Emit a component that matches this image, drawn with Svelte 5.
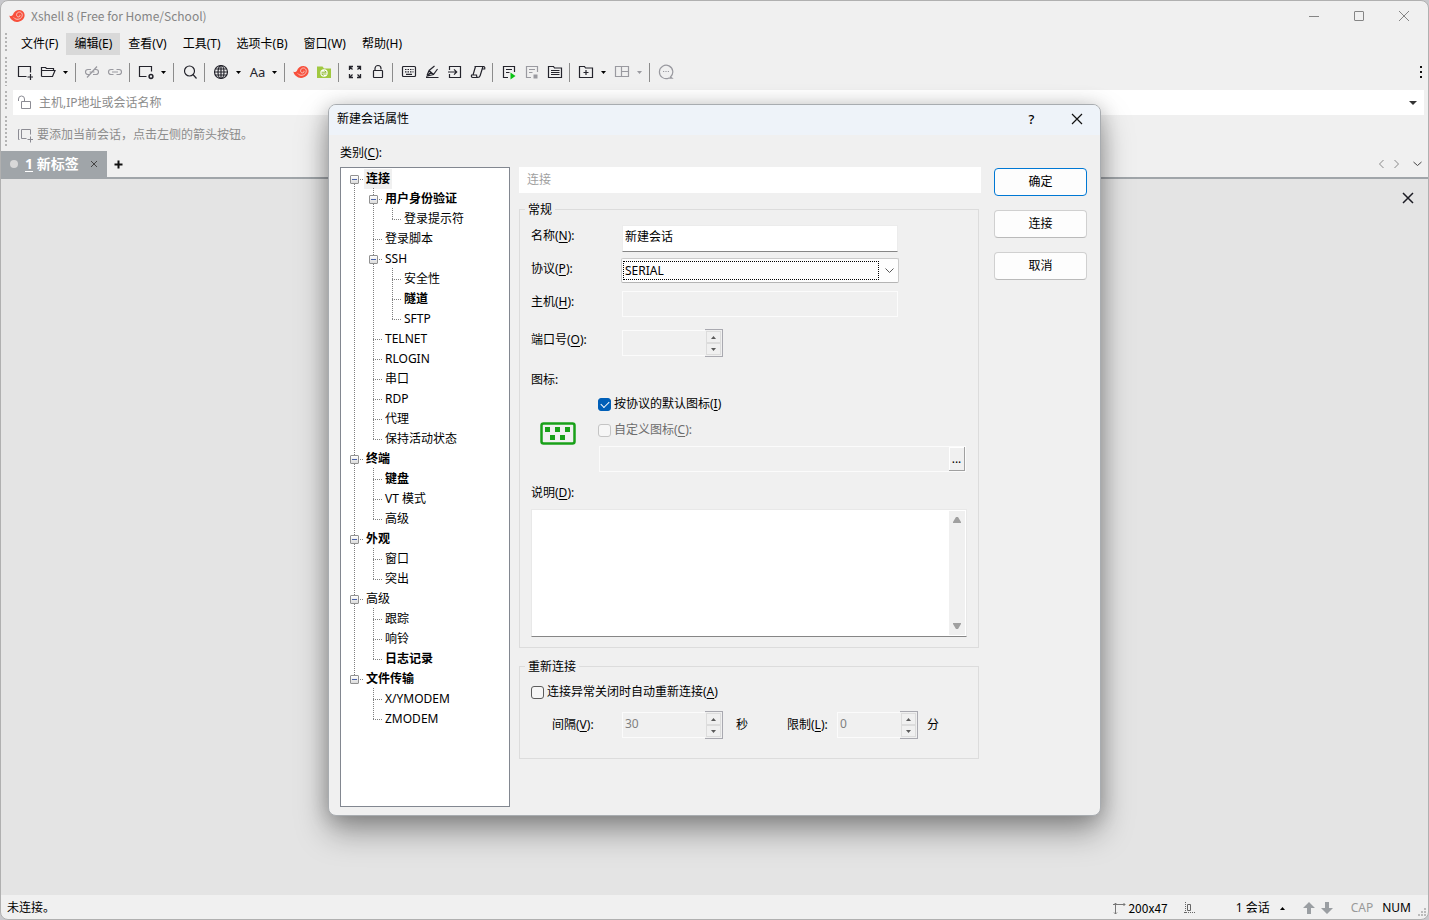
<script lang="ts">
    type Node = { name: string; bold?: boolean; selected?: boolean; children?: Node[] };

    const menus = [
        { text: '文件', key: 'F' },
        { text: '编辑', key: 'E', active: true },
        { text: '查看', key: 'V' },
        { text: '工具', key: 'T' },
        { text: '选项卡', key: 'B' },
        { text: '窗口', key: 'W' },
        { text: '帮助', key: 'H' }
    ];

    // '|' is a separator, 'v' a drop-down arrow
    const tools = [
        'new', 'open', 'v', '|', 'unlink', 'link', '|', 'props', 'v', '|', 'search', '|',
        'globe', 'v', 'font', 'v', '|', 'shell', 'xftp', '|', 'full', 'lock', '|',
        'keyboard', 'pen', 'enter', 'script', '|', 'play', 'stop', 'log', '|',
        'addfolder', 'v', 'layout', 'v-off', '|', 'chat'
    ];

    const tree: Node[] = [
        { name: '连接', bold: true, selected: true, children: [
            { name: '用户身份验证', bold: true, children: [{ name: '登录提示符' }] },
            { name: '登录脚本' },
            { name: 'SSH', children: [{ name: '安全性' }, { name: '隧道', bold: true }, { name: 'SFTP' }] },
            { name: 'TELNET' },
            { name: 'RLOGIN' },
            { name: '串口' },
            { name: 'RDP' },
            { name: '代理' },
            { name: '保持活动状态' }
        ] },
        { name: '终端', bold: true, children: [
            { name: '键盘', bold: true }, { name: 'VT 模式' }, { name: '高级' }
        ] },
        { name: '外观', bold: true, children: [{ name: '窗口' }, { name: '突出' }] },
        { name: '高级', children: [
            { name: '跟踪' }, { name: '响铃' }, { name: '日志记录', bold: true }
        ] },
        { name: '文件传输', bold: true, children: [{ name: 'X/YMODEM' }, { name: 'ZMODEM' }] }
    ];

    let sessionName = $state('新建会话');
    let protocol = $state('SERIAL');
    let defaultIcon = $state(true);
    let reconnect = $state(false);
</script>

{#snippet caret()}
    <svg class="caret" width="5" height="3" viewBox="0 0 5 3"><path d="M0 0h5L2.5 3z" fill="currentColor" /></svg>
{/snippet}

{#snippet shell()}
    <path d="M.3 7.500c1.500.9 2.800.6 3.600-.8C5 3.500 7.500 1.800 10.500 1.900c3 .2 5.300 2.600 5.100 5.700-.3 4-3.800 6.500-7.700 6.300C4.300 13.700 1.300 11.500.3 7.500z" fill="#f8503c" />
    <path d="M4.800 9.500c2 2.800 6.900 2.200 8.200-1.100 1-2.700-1-4.900-3.300-4.300-2.300.6-2.900 3.600-1.100 4.600 1.500.8 3-.6 2.200-1.900" fill="none" stroke="#f6d4ce" stroke-width="0.9" />
{/snippet}

{#snippet icon(name: string)}
    <svg width="16" height="16" viewBox="0 0 16 16" fill="none" stroke="currentColor" stroke-width="1.2">
        {#if name === 'new'}
            <path d="M9.500 12.500h-8v-10h12v6M13.500 10v6M10.500 13h6" />
        {:else if name === 'open'}
            <path d="M1.500 12.500v-9h4l1 1h7v2M1.500 12.500h11l2.500-6H4.500M1.500 6.500h4" />
        {:else if name === 'unlink'}
            <path d="M6.500 10.500H4a2.500 2.500 0 0 1 0-5h3M9.500 5.500H12a2.500 2.500 0 0 1 0 5H9M5.500 8h5M3 13.500 13 2.500" />
        {:else if name === 'link'}
            <path d="M6.500 10.500H4a2.500 2.500 0 0 1 0-5h2.500M9.500 5.500H12a2.500 2.500 0 0 1 0 5H9.500M5 8h6" />
        {:else if name === 'props'}
            <path d="M8.500 12.500h-7v-10h12v5" /><circle cx="13" cy="12.500" r="1.900" stroke-width="1.500" />
        {:else if name === 'search'}
            <circle cx="7.500" cy="7" r="5" /><path d="m11 10.500 3.500 4" />
        {:else if name === 'globe'}
            <circle cx="8" cy="8" r="6.500" /><ellipse cx="8" cy="8" rx="3" ry="6.500" /><path d="M8 1.500v13M1.500 8h13M2.500 5h11M2.500 11h11" />
        {:else if name === 'shell'}
            <g stroke="none">{@render shell()}</g>
        {:else if name === 'xftp'}
            <path d="M1 2.500h5.500l1.500 2h7v9.500H1z" fill="#a0c840" stroke="none" />
            <circle cx="8" cy="9" r="3.700" fill="#fff" stroke="none" /><path d="M5.500 8.200h4.800M8.500 6.700l1.800 1.500M10.500 10h-4.800M7.500 11.500 5.700 10" stroke="#8ab82c" stroke-width="1" />
        {:else if name === 'full'}
            <path d="M2.500 6V2.500H6M10 2.500h3.500V6M13.500 10v3.500H10M6 13.500H2.500V10M2.500 2.500l3 3M13.500 2.500l-3 3M13.500 13.500l-3-3M2.500 13.500l3-3" stroke-width="1.300" />
        {:else if name === 'lock'}
            <rect x="3.500" y="6.500" width="9" height="7" rx="0.500" /><path d="M5 6.500V4.500a3 3 0 0 1 6 0v1" />
        {:else if name === 'keyboard'}
            <rect x="1.500" y="2.500" width="13" height="10" rx="1" /><path d="M4 5.500h8.500M4 7.800h8.500" stroke-dasharray="1.500 1" /><path d="M5 10.300h6" />
        {:else if name === 'pen'}
            <path d="M2 13.500h12.500M3 11.500 5 6.500M5 6.500l5.500-4.500M13.500 5l-4 5.500-6 1.500 3.500-4M5 6.500l4.500 4" />
        {:else if name === 'enter'}
            <path d="M2.500 6V2.500h11v11h-11V10M1 8h8.500M7 5.300 9.700 8 7 10.700" />
        {:else if name === 'script'}
            <path d="M4.500 2.500h9c1.200 0 1.500 1 1.200 2.500h-2.500M5.500 2.500 3 11M12.800 3l-2.600 8.500c-.4 1.500-1.200 2-2.500 2h-5C1.500 13.500 1.200 12.500 1.500 11h5c0 1.500.3 2.500 1.500 2.500" />
        {:else if name === 'play'}
            <path d="M7 13.500H2.500v-11h11V8M5 5.500h6M5 8.500h3.500" /><path d="M9.500 8.500v7l5-3.500z" fill="#0ac414" stroke="none" />
        {:else if name === 'stop'}
            <path d="M7 13.500H2.500v-11h11V8M5 5.500h6M5 8.500h3.500" /><path d="M9.500 10.500h4v4h-4z" fill="currentColor" stroke="none" />
        {:else if name === 'log'}
            <path d="M1.500 2.500h5l1 1.500h7v9.500h-13zM4 6.500h8.500M4 8.500h8.500M4 10.500h8.500" />
        {:else if name === 'addfolder'}
            <path d="M1.500 2.500h5l1 1.500h7v9.500h-13zM8 6v5M5.500 8.500h5" />
        {:else if name === 'layout'}
            <path d="M1.500 2.500h13v10h-13zM7.500 2.500v10M7.500 7.500h7" />
        {:else if name === 'chat'}
            <path d="M12.500 13a6.700 6.700 0 1 0-2 1.200h3.500z" /><path d="M5 7.500h6" stroke-dasharray="1.200 1.200" />
        {/if}
    </svg>
{/snippet}

{#snippet branch(nodes: Node[])}
    <ul>
        {#each nodes as node}
            <li>
                <div class="node">
                    {#if node.children}
                        <button class="toggle" aria-label="折叠 {node.name}"></button>
                    {/if}
                    <span class:bold={node.bold} class:selected={node.selected}>{node.name}</span>
                </div>
                {#if node.children}
                    {@render branch(node.children)}
                {/if}
            </li>
        {/each}
    </ul>
{/snippet}

{#snippet spinButtons()}
    <span class="spin-buttons">
        <button disabled aria-label="增加"><svg width="5" height="3" viewBox="0 0 5 3"><path d="M0 3h5L2.500 0z" fill="#5a5a5a" /></svg></button>
        <button disabled aria-label="减少"><svg width="5" height="3" viewBox="0 0 5 3"><path d="M0 0h5L2.500 3z" fill="#5a5a5a" /></svg></button>
    </span>
{/snippet}

<div class="window">
    <header class="titlebar">
        <svg width="16" height="16" viewBox="0 0 16 16">{@render shell()}</svg>
        <h1>Xshell 8 (Free for Home/School)</h1>
        <button aria-label="最小化"><svg width="12" height="12" viewBox="0 0 12 12"><path d="M1 6.500h10" /></svg></button>
        <button aria-label="最大化"><svg width="12" height="12" viewBox="0 0 12 12"><rect x="1.500" y="1.500" width="9" height="9" rx="0.500" /></svg></button>
        <button aria-label="关闭"><svg width="12" height="12" viewBox="0 0 12 12"><path d="m1 1 10 10M11 1 1 11" /></svg></button>
    </header>

    <nav class="menubar grip">
        {#each menus as menu}
            <button class:active={menu.active}>{menu.text}({menu.key})</button>
        {/each}
    </nav>

    <div class="toolbar grip">
        {#each tools as tool}
            {#if tool === '|'}
                <span class="sep"></span>
            {:else if tool.startsWith('v')}
                <button class="drop" class:off={tool === 'v-off'} aria-label="更多">{@render caret()}</button>
            {:else if tool === 'font'}
                <button class="tool font">Aa</button>
            {:else}
                <button class="tool" class:off={['unlink', 'link', 'stop', 'layout', 'chat'].includes(tool)} aria-label={tool}>
                    {@render icon(tool)}
                </button>
            {/if}
        {/each}
        <button class="more" aria-label="工具栏选项"><i></i><i></i><i></i></button>
    </div>

    <div class="address grip">
        <div class="address-box">
            <svg width="16" height="16" viewBox="0 0 16 16" fill="none" stroke="#8c8c94"><path d="M4.500 6.500h9v7h-9zM7.500 6.500V4a3 3 0 0 0-6 0v2" /></svg>
            <input type="text" placeholder="主机,IP地址或会话名称" aria-label="地址" />
            <button aria-label="历史"><svg width="8" height="4" viewBox="0 0 8 4"><path d="M0 0h8L4 4z" fill="#333" /></svg></button>
        </div>
    </div>

    <div class="quick grip">
        <svg width="16" height="16" viewBox="0 0 16 16" fill="none" stroke="#8c8c94"><path d="M2.500 2.500h-1v10h1M9.500 11.500h-5v-9h9v5M13.500 9.500v6M10.500 12.500h6" /></svg>
        <span>要添加当前会话，点击左侧的箭头按钮。</span>
    </div>

    <div class="tabs">
        <div class="tab">
            <i class="dot"></i>
            <b><u>1</u> 新标签</b>
            <button aria-label="关闭标签"><svg width="8" height="8" viewBox="0 0 8 8"><path d="m1 1 6 6M7 1 1 7" stroke="#444" /></svg></button>
        </div>
        <button class="add" aria-label="新建标签"><svg width="9" height="9" viewBox="0 0 9 9"><path d="M4.500.5v8M.5 4.500h8" stroke="#111" stroke-width="2" /></svg></button>
        <span class="tab-nav">
            <button aria-label="上一个"><svg width="7" height="10" viewBox="0 0 7 10"><path d="M5.500 1 1.500 5l4 4" /></svg></button>
            <button aria-label="下一个"><svg width="7" height="10" viewBox="0 0 7 10"><path d="m1.500 1 4 4-4 4" /></svg></button>
            <button class="list" aria-label="标签列表"><svg width="9" height="6" viewBox="0 0 9 6"><path d="m.5 1 4 3.500 4-3.500" /></svg></button>
        </span>
    </div>

    <main>
        <button aria-label="关闭"><svg width="12" height="12" viewBox="0 0 12 12"><path d="m1 1 10 10M11 1 1 11" stroke="#1c1c24" stroke-width="1.500" /></svg></button>
    </main>

    <footer>
        <span class="message">未连接。</span>
        <span class="size">
            <svg width="13" height="13" viewBox="0 0 13 13" fill="none" stroke="#777"><path d="M2.500 12V1M0 2.500h12M1 3l1.500-2L4 3M10.500 1l1.500 1.500L10.500 4M1 10.500l1.500 1.500L4 10.500" /></svg>
            200x47
        </span>
        <svg class="pos" width="12" height="12" viewBox="0 0 12 12" fill="none" stroke="#666"><path d="M1.500 0v12" stroke-dasharray="1 1" /><path d="M0 10.500h12" stroke-dasharray="1 1" /><path d="M3.500 2.500h3v6h-3z" /></svg>
        <button class="sessions">1 会话 <svg width="5" height="3" viewBox="0 0 5 3"><path d="M0 3h5L2.500 0z" /></svg></button>
        <svg class="arrows" width="30" height="12" viewBox="0 0 30 12" fill="#9a9ea2"><path d="M6 0l6 6H8v6H4V6H0zM24 12l-6-6h4V0h4v6h4z" /></svg>
        <span class="cap">CAP</span>
        <span>NUM</span>
        <svg class="resize" width="10" height="10" viewBox="0 0 10 10" fill="#bbb"><path d="M7 0h2v2H7zM4 3h2v2H4zM7 3h2v2H7zM1 6h2v2H1zM4 6h2v2H4zM7 6h2v2H7z" /></svg>
    </footer>
</div>

<div class="overlay">
    <div class="dialog" role="dialog" aria-labelledby="dialog-title">
        <div class="dialog-title">
            <h2 id="dialog-title">新建会话属性</h2>
            <button class="help" aria-label="帮助">?</button>
            <button aria-label="关闭"><svg width="12" height="12" viewBox="0 0 12 12"><path d="m1 1 10 10M11 1 1 11" stroke="#111" stroke-width="1.200" /></svg></button>
        </div>
        <div class="category">类别(<u>C</u>):</div>
        <div class="dialog-body">
            <nav class="tree">{@render branch(tree)}</nav>

            <form class="pane">
                <div class="pane-title">连接</div>

                <fieldset>
                    <legend>常规</legend>
                    <div class="row">
                        <label for="name">名称(<u>N</u>):</label>
                        <input id="name" class="text" type="text" bind:value={sessionName} />
                    </div>
                    <div class="row">
                        <label for="protocol">协议(<u>P</u>):</label>
                        <div class="combo">
                            <select id="protocol" bind:value={protocol}>
                                <option>SSH</option>
                                <option>TELNET</option>
                                <option>SERIAL</option>
                            </select>
                            <svg width="9" height="6" viewBox="0 0 9 6"><path d="m.5.500 4 4 4-4" fill="none" stroke="#555" /></svg>
                        </div>
                    </div>
                    <div class="row host">
                        <label for="host">主机(<u>H</u>):</label>
                        <input id="host" class="text" type="text" disabled />
                    </div>
                    <div class="row port">
                        <label for="port">端口号(<u>O</u>):</label>
                        <div class="spin"><input id="port" type="text" disabled />{@render spinButtons()}</div>
                    </div>

                    <div class="icon-label">图标:</div>
                    <div class="icon-row">
                        <svg width="36" height="24" viewBox="0 0 36 24">
                            <rect x="1.500" y="1.500" width="33" height="20" rx="2" fill="none" stroke="#18a018" stroke-width="2.500" />
                            <path d="M5 5h5v5H5zM15 5h5v5h-5zM25 5h5v5h-5zM10 13h5v5h-5zM20 13h5v5h-5z" fill="#18a018" />
                        </svg>
                        <div class="icon-options">
                            <label class="check"><input type="checkbox" bind:checked={defaultIcon} />按协议的默认图标(<u>I</u>)</label>
                            <label class="check disabled"><input type="checkbox" disabled />自定义图标(<u>C</u>):</label>
                            <div class="path">
                                <input type="text" aria-label="图标路径" disabled />
                                <button type="button">...</button>
                            </div>
                        </div>
                    </div>

                    <label class="desc-label" for="desc">说明(<u>D</u>):</label>
                    <div class="desc">
                        <textarea id="desc"></textarea>
                        <div class="scroll">
                            <svg width="8" height="6" viewBox="0 0 8 6"><path d="M0 6V5l3-5h2l3 5v1z" /></svg>
                            <svg width="8" height="6" viewBox="0 0 8 6"><path d="M0 0v1l3 5h2l3-5V0z" /></svg>
                        </div>
                    </div>
                </fieldset>

                <fieldset class="reconnect">
                    <legend>重新连接</legend>
                    <label class="check"><input type="checkbox" bind:checked={reconnect} />连接异常关闭时自动重新连接(<u>A</u>)</label>
                    <div class="timing">
                        <label for="interval">间隔(<u>V</u>):</label>
                        <div class="spin"><input id="interval" type="text" value="30" disabled />{@render spinButtons()}</div>
                        <span class="unit">秒</span>
                        <label for="limit">限制(<u>L</u>):</label>
                        <div class="spin"><input id="limit" type="text" value="0" disabled />{@render spinButtons()}</div>
                        <span>分</span>
                    </div>
                </fieldset>
            </form>

            <div class="actions">
                <button class="primary">确定</button>
                <button>连接</button>
                <button>取消</button>
            </div>
        </div>
    </div>
</div>

<style>
    :global(body) { margin: 0; background: #c8c8cc; }
    :global(*) { box-sizing: border-box; }

    .window, .overlay { font: 12px/20px 'Noto Sans', 'Noto Sans CJK SC', sans-serif; color: #000; }
    button, input, select, textarea { font: inherit; color: inherit; margin: 0; padding: 0; border: 0; background: none; border-radius: 0; }
    button { display: flex; align-items: center; justify-content: center; white-space: nowrap; }
    h1, h2 { font-size: 12px; font-weight: 400; margin: 0; }
    u { text-underline-offset: 2px; }
    svg { display: block; flex: none; }

    .window { display: flex; flex-direction: column; min-height: 100vh; border: 1px solid #b0b0b0; border-radius: 8px; background: #f0f0f0; overflow: hidden; }

    .titlebar { display: flex; align-items: center; height: 31px; padding: 0 2px 2px 8px; color: #858585; }
    .titlebar h1 { flex: 1; padding-left: 6px; font-family: 'Noto Sans CJK SC', sans-serif; }
    .titlebar button { width: 45px; height: 28px; }
    .titlebar button svg { fill: none; stroke: #858585; }

    /* dotted handle at the left edge of every bar */
    .grip { position: relative; }
    .grip::before { content: ''; position: absolute; left: 4px; top: 1px; bottom: 4px; width: 2px; background: repeating-linear-gradient(#b4b4b4 0 2px, transparent 2px 4px); }

    .menubar { display: flex; align-items: center; height: 24px; padding-left: 12px; }
    .menubar button { height: 22px; padding: 0 8px; }
    .menubar .active { background: #d9d9d9; }

    .toolbar { display: flex; align-items: center; height: 34px; padding: 0 0 2px 13px; }
    .tool { width: 23px; height: 24px; padding-right: 1px; color: #24242c; }
    .tool.font { padding: 0; font-size: 13px; }
    .drop { width: 10px; height: 24px; margin-right: 3px; }
    .tool.off, .drop.off { color: #9a9aa0; }
    .sep { width: 1px; height: 19px; margin: 0 5px 0 2px; background: #8c8c8c; }
    .more { flex-direction: column; gap: 3px; width: 10px; margin-left: auto; margin-right: 2px; }
    .more i { width: 2px; height: 2px; background: #111; }

    .address { padding: 0 4px 0 12px; }
    .address-box { display: flex; align-items: center; height: 25px; padding-left: 4px; background: #fff; }
    .address-box input { flex: 1; padding-left: 6px; outline: 0; }
    .address-box input::placeholder { color: #8c8c8c; opacity: 1; }
    .address-box button { width: 22px; height: 24px; }
    .quick { display: flex; align-items: center; height: 36px; padding: 4px 0 0 16px; gap: 4px; color: #8c8c8c; }

    .tabs { display: flex; align-items: center; height: 28px; border-bottom: 2px solid #a0a5a9; }
    .tab { display: flex; align-items: center; height: 26px; padding: 0 9px; background: #a0a5a9; color: #fff; font-size: 14px; }
    .dot { width: 8px; height: 8px; margin-right: 7px; border-radius: 50%; background: #d8d8d8; }
    .tab button { margin-left: 11px; }
    .add { margin-left: 7px; }
    .tab-nav { display: flex; align-items: center; gap: 8px; margin-left: auto; padding-right: 6px; }
    .tab-nav svg { fill: none; stroke: #888; }
    .tab-nav .list { margin-left: 5px; }
    .tab-nav .list svg { stroke: #444; stroke-width: 1px; }

    main { flex: 1; display: flex; justify-content: flex-end; align-items: flex-start; padding: 13px 14px; background: #e4e4e4; }

    footer { display: flex; align-items: center; height: 24px; padding: 2px 0 0 6px; }
    .message { flex: 1; }
    .size { display: flex; align-items: center; gap: 2px; font-family: 'Noto Sans CJK SC', sans-serif; }
    .pos { margin-left: 16px; }
    .sessions { margin-left: 40px; gap: 10px; }
    .arrows { margin: 0 18px; }
    .cap { margin-right: 9px; color: #999; }
    .resize { align-self: flex-end; margin: 0 1px 1px 6px; }

    .overlay { position: absolute; inset: 0; display: flex; justify-content: center; align-items: flex-start; padding-top: 104px; }
    .dialog { width: 773px; border: 1px solid #a8acb0; border-radius: 8px; background: #f0f0f0; overflow: hidden; box-shadow: 0 16px 32px rgba(0, 0, 0, 0.35), 0 2px 20px rgba(0, 0, 0, 0.2); }
    .dialog-title { display: flex; align-items: center; height: 30px; padding: 0 1px 2px 8px; background: #eef3f9; }
    .dialog-title h2 { flex: 1; }
    .dialog-title button { width: 45px; height: 28px; }
    .dialog-title .help { font-size: 13px; font-weight: 500; }
    .category { padding: 8px 11px 4px; }
    .dialog-body { display: grid; grid-template-columns: 170px 1fr 93px; padding: 0 13px 8px 11px; }

    .tree { min-height: 640px; padding-left: 4px; border: 1px solid #828790; background: #fff; }
    .tree ul { list-style: none; margin: 0; padding: 0; }
    .tree ul ul { margin-left: 19px; }
    .tree li { position: relative; }
    .tree li::before { content: ''; position: absolute; left: 9px; top: 0; bottom: 0; width: 1px; background: repeating-linear-gradient(#808080 0 1px, transparent 1px 2px); }
    .tree li:last-child::before { bottom: auto; height: 12px; }
    .tree > ul > li:first-child::before { top: 12px; }
    .node { position: relative; display: flex; height: 20px; padding: 1px 0 0 19px; }
    .node::before { content: ''; position: absolute; left: 9px; top: 11px; width: 9px; height: 1px; background: repeating-linear-gradient(90deg, #808080 0 1px, transparent 1px 2px); }
    .node span { height: 20px; padding: 0 2px; white-space: nowrap; }
    .toggle { position: absolute; left: 5px; top: 7px; width: 9px; height: 9px; border: 1px solid #919191; border-radius: 1px; background: linear-gradient(#4b63a7, #4b63a7) center / 5px 1px no-repeat, linear-gradient(#fff, #dcdcdc); }
    .bold { font-weight: 700; }
    .selected { background: #f0f0f0; }

    .pane { padding: 0 13px 0 9px; }
    .pane-title { height: 26px; margin-bottom: 6px; padding: 3px 8px; background: #fff; color: #a0a0a0; }
    fieldset { min-width: 0; margin: 0 2px 0 0; padding: 6px 11px 10px; border: 1px solid #dcdcdc; }
    legend { height: 20px; margin-left: -6px; padding: 1px 3px 0; }

    .row { display: grid; grid-template-columns: 91px 276px; align-items: start; margin-bottom: 6px; }
    .row label { height: 20px; padding-top: 1px; }
    .text { height: 26px; padding: 0 2px; border: 1px solid #fbfbfb; }
    #name { height: 27px; padding-bottom: 5px; border-color: #ececec; border-bottom-color: #868686; background: #fff; outline: 0; }
    .combo { display: flex; align-items: center; height: 25px; margin: 0 -1px; padding: 2px 4px 2px 1px; border: 1px solid #cacaca; border-bottom-color: #b4b4b4; border-radius: 2px; background: #fdfdfd; }
    .combo select { flex: 1; height: 19px; margin-right: 6px; padding-left: 1px; line-height: 17px; appearance: none; border: 1px dotted #000; outline: 0; }
    .host { margin: 8px 0 12px; }
    .port { margin-bottom: 12px; }

    .spin { display: flex; height: 28px; }
    .spin input { width: 83px; margin: 1px 0; padding: 0 2px 3px; border: 1px solid #fbfbfb; border-right: 0; color: #808080; }
    .spin-buttons { display: flex; flex-direction: column; width: 18px; padding: 1px; border: 1px solid #a9a9b0; border-left: 0; }
    .spin-buttons button { flex: 1; border: 1px solid #dcdcdc; }

    .icon-label { height: 20px; padding-top: 1px; }
    .icon-row { display: flex; gap: 22px; margin-top: 5px; padding-left: 9px; }
    .icon-row > svg { margin-top: 28px; }
    .icon-options { flex: 1; display: flex; flex-direction: column; gap: 6px; padding-right: 1px; }
    .check { display: flex; align-items: center; }
    .check input { appearance: none; width: 13px; height: 13px; margin-right: 3px; border: 1px solid #5c5c5c; border-radius: 3px; background: #f6f6f6; }
    .check input:checked { position: relative; border-color: #005fb8; background: #005fb8; }
    .check input:checked::after { content: ''; position: absolute; left: 2px; top: 2px; width: 7px; height: 4px; border: solid #fff; border-width: 0 0 1px 1px; transform: rotate(-45deg); }
    .check.disabled { color: #6d6d6d; }
    .check.disabled input { border-color: #c4c4c4; }
    .path { display: flex; height: 26px; margin-left: 1px; border: 1px solid #fbfbfb; }
    .path input { flex: 1; }
    .path button { width: 16px; border: solid #a0a0a0; border-width: 0 1px 1px 0; box-shadow: inset 1px 1px #fff; }

    .desc-label { display: block; margin: 11px 0 6px; }
    .desc { display: flex; height: 128px; padding: 1px; border: 1px solid #e8e8e8; border-bottom-color: #868686; background: #fff; }
    .desc textarea { flex: 1; resize: none; outline: 0; }
    .scroll { display: flex; flex-direction: column; justify-content: space-between; width: 16px; padding: 6px 4px; background: #f0f0f0; }
    .scroll svg { fill: #a0a0a0; }

    .reconnect { margin-top: 8px; padding-bottom: 19px; }
    .timing { display: grid; grid-template-columns: 70px 101px 64px 50px 81px auto; align-items: center; margin-top: 9px; padding-left: 21px; }
    .timing .spin input { flex: 1; width: auto; min-width: 0; }
    .timing span.unit { padding-left: 13px; }
    .timing > span:last-child { padding-left: 9px; }

    .actions { display: flex; flex-direction: column; gap: 14px; padding-top: 1px; }
    .actions button { height: 28px; border: 1px solid #d0d0d0; border-bottom-color: #bababa; border-radius: 4px; background: #fdfdfd; }
    .actions .primary { border-color: #0078d4; }
</style>
